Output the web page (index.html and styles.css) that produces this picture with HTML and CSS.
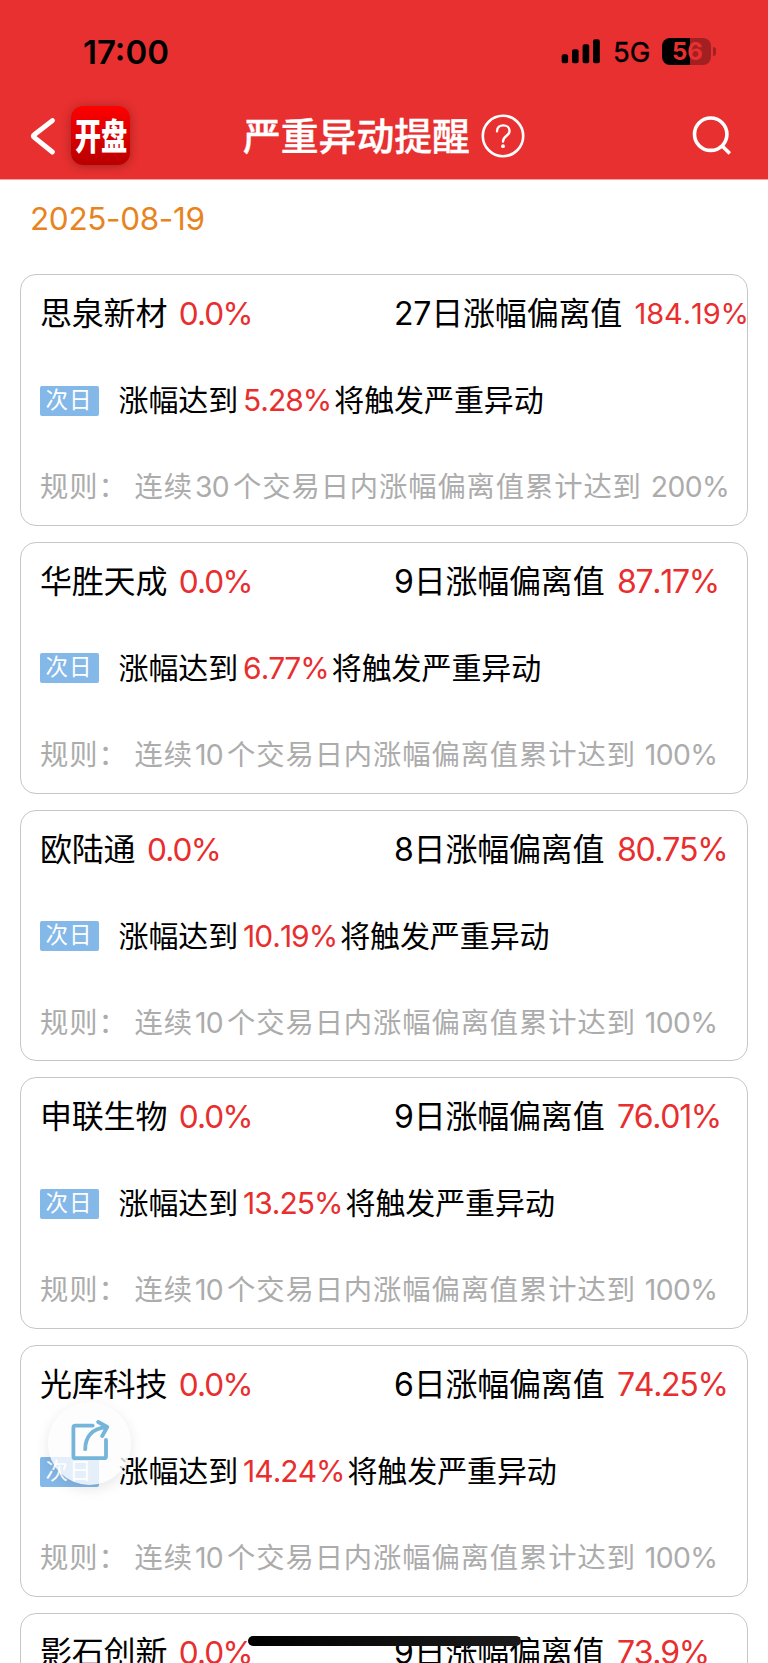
FILE: index.html
```
<!DOCTYPE html>
<html lang="zh-CN">
<head>
<meta charset="utf-8">
<title>严重异动提醒</title>
<link rel="stylesheet" href="styles.css">
</head>
<body>
<header class="header">
  <div class="status">
    <span class="clock">17:00</span>
    <div class="status-right">
      <svg class="signal" width="40" height="25" viewBox="0 0 40 25"><rect x="0.7" y="15.3" width="6.4" height="9" rx="2"/><rect x="11" y="10.3" width="6.6" height="14" rx="2"/><rect x="21.6" y="5.2" width="6.6" height="19.1" rx="2"/><rect x="32" y="0.2" width="6.8" height="24.1" rx="2"/></svg>
      <span class="network">5G</span>
      <div class="battery"><span class="battery-level">56</span><i class="battery-cap"></i></div>
    </div>
  </div>
  <nav class="nav">
    <div class="nav-left">
      <svg width="28" height="40" viewBox="0 0 28 40"><path d="M23.4 4.6 5.2 18.8Q3.4 20 5.2 21.4L23.4 36" fill="none" stroke="#fff" stroke-width="5" stroke-linecap="round" stroke-linejoin="round"/></svg>
      <div class="logo"><span class="logo-text">开盘</span></div>
    </div>
    <div class="nav-title"><h1>严重异动提醒</h1>
      <svg width="44" height="44" viewBox="0 0 44 44" fill="none" stroke="#fff"><circle cx="22" cy="22" r="20.2" stroke-width="2.6"/><path d="M16 17.2C16 13.6 18.6 11.4 22.2 11.4S28.6 13.7 28.6 17C28.6 22 22 21.6 22 27.6" stroke-width="2.4" stroke-linecap="round"/><circle cx="22" cy="32.2" r="1.9" fill="#fff" stroke="none"/></svg>
    </div>
    <svg class="search" width="44" height="44" viewBox="0 0 44 44" fill="none" stroke="#fff" stroke-width="3.6"><circle cx="20.7" cy="20.2" r="16.2"/><path d="M31.7 31.5 39.8 39.6"/></svg>
  </nav>
</header>
<main class="main">
  <div class="date">2025-08-19</div>
  <section class="card">
    <div class="row head"><span class="stock">思泉新材<span class="num pct">0.0%</span></span><span class="dev"><b>27</b>日涨幅偏离值</span><span class="num val small">184.19%</span></div>
    <div class="row cond"><span class="tag">次日</span><span>涨幅达到</span><span class="num">5.28%</span><span>将触发严重异动</span></div>
    <div class="row rule"><span class="label">规则：</span><span>连续</span><b>30</b><span>个交易日内涨幅偏离值累计达到</span><b class="limit">200%</b></div>
  </section>
  <section class="card">
    <div class="row head"><span class="stock">华胜天成<span class="num pct">0.0%</span></span><span class="dev"><b>9</b>日涨幅偏离值</span><span class="num val">87.17%</span></div>
    <div class="row cond"><span class="tag">次日</span><span>涨幅达到</span><span class="num">6.77%</span><span>将触发严重异动</span></div>
    <div class="row rule"><span class="label">规则：</span><span>连续</span><b>10</b><span>个交易日内涨幅偏离值累计达到</span><b class="limit">100%</b></div>
  </section>
  <section class="card">
    <div class="row head"><span class="stock">欧陆通<span class="num pct">0.0%</span></span><span class="dev"><b>8</b>日涨幅偏离值</span><span class="num val">80.75%</span></div>
    <div class="row cond"><span class="tag">次日</span><span>涨幅达到</span><span class="num">10.19%</span><span>将触发严重异动</span></div>
    <div class="row rule"><span class="label">规则：</span><span>连续</span><b>10</b><span>个交易日内涨幅偏离值累计达到</span><b class="limit">100%</b></div>
  </section>
  <section class="card">
    <div class="row head"><span class="stock">申联生物<span class="num pct">0.0%</span></span><span class="dev"><b>9</b>日涨幅偏离值</span><span class="num val">76.01%</span></div>
    <div class="row cond"><span class="tag">次日</span><span>涨幅达到</span><span class="num">13.25%</span><span>将触发严重异动</span></div>
    <div class="row rule"><span class="label">规则：</span><span>连续</span><b>10</b><span>个交易日内涨幅偏离值累计达到</span><b class="limit">100%</b></div>
  </section>
  <section class="card">
    <div class="row head"><span class="stock">光库科技<span class="num pct">0.0%</span></span><span class="dev"><b>6</b>日涨幅偏离值</span><span class="num val">74.25%</span></div>
    <div class="row cond"><span class="tag">次日</span><span>涨幅达到</span><span class="num">14.24%</span><span>将触发严重异动</span></div>
    <div class="row rule"><span class="label">规则：</span><span>连续</span><b>10</b><span>个交易日内涨幅偏离值累计达到</span><b class="limit">100%</b></div>
  </section>
  <section class="card">
    <div class="row head"><span class="stock">影石创新<span class="num pct">0.0%</span></span><span class="dev"><b>9</b>日涨幅偏离值</span><span class="num val">73.9%</span></div>
  </section>
</main>
<div class="share">
  <svg width="42" height="44" viewBox="0 0 42 44" fill="none" stroke="#75b5d9" stroke-width="3.8" stroke-linecap="round" stroke-linejoin="round"><path d="M23.7 5.6H6.4Q4.4 5.6 4.4 7.6V36.2Q4.4 38.2 6.4 38.2H35Q37 38.2 37 36.2V19.8"/><path d="M16.2 29.2C16.2 17.5 23 7.8 37.5 7.4"/><path d="M29.2 2 38.2 7 33.2 16"/></svg>
</div>
<div class="home-bar"></div>
</body>
</html>
```
FILE: styles.css
```
* { box-sizing: border-box; }
body {
  margin: 0;
  height: 1663px;
  overflow: hidden;
  position: relative;
  background: #fff;
  color: #000;
  font-family: Inter, "Noto Sans CJK SC", sans-serif;
}
b { font-weight: inherit; }
svg { display: block; flex: none; }

.header { height: 180px; background: #e83030; border-bottom: 1px solid #f4a3a3; }
.status {
  height: 92px;
  padding: 11px 52px 0 83px;
  display: flex;
  align-items: center;
  justify-content: space-between;
}
.clock { font-size: 33px; font-weight: 600; line-height: 40px; }
.status-right { display: flex; align-items: center; }
.signal { margin-right: 12px; fill: #000; }
.network { width: 49px; font-size: 27.5px; line-height: 34px; padding-top: 1px; -webkit-text-stroke: 0.4px #000; }
.battery { display: flex; align-items: center; gap: 2px; }
.battery-level {
  width: 49px;
  height: 27px;
  border-radius: 8px;
  background: linear-gradient(90deg, #000 56.5%, #a21f22 56.5%);
  color: #e83030;
  font-size: 24px;
  font-weight: 700;
  line-height: 27px;
  padding-left: 2px;
  text-align: center;
}
.battery-cap { width: 3px; height: 9px; border-radius: 0 4px 4px 0; background: #a21f22; }

.nav {
  height: 87px;
  padding: 0 34px 0 29px;
  display: grid;
  grid-template-columns: 214px 1fr 44px;
  align-items: center;
}
.nav-left { display: flex; align-items: center; gap: 14px; }
.logo {
  width: 59px;
  height: 59px;
  border-radius: 12px;
  background: linear-gradient(#fe0000, #b80000);
  box-shadow: 0 1px 10px rgba(80, 20, 20, 0.45);
  display: flex;
  align-items: center;
  justify-content: center;
}
.logo-text {
  color: #fff;
  font-size: 36px;
  font-weight: 900;
  line-height: 40px;
  padding-top: 3px;
  flex: none;
  transform: scaleX(0.73);
}
.nav-title { display: flex; align-items: center; gap: 11px; color: #fff; }
.nav-title h1 {
  margin: 0;
  font-size: 37.8px;
  font-weight: 500;
  line-height: 50px;
  white-space: nowrap;
  -webkit-text-stroke: 0.4px #fff;
}

.main { padding: 0 20px; }
.date {
  height: 94px;
  padding: 19px 10px 0;
  color: #e88420;
  font-size: 31.5px;
  line-height: 40px;
  letter-spacing: -0.35px;
}
.card {
  height: 251.75px;
  margin-bottom: 16px;
  padding: 0 19px;
  border: 1px solid #c6c6c6;
  border-radius: 16px;
}
.row { display: flex; align-items: center; white-space: nowrap; line-height: 40px; }
.row > * { flex: none; }
.num { color: #e82e2e; font-kerning: none; }
.head { height: 78px; font-size: 32px; letter-spacing: -0.2px; }
.stock { width: 354px; }
.pct { margin-left: 11.5px; font-size: 31.6px; letter-spacing: -1.7px; }
.val { margin-left: 12.5px; letter-spacing: -1.3px; }
.small { font-size: 29px; letter-spacing: -0.1px; }
.cond { height: 94px; font-size: 30px; letter-spacing: -0.1px; }
.cond .num { margin: 0 3px 0 5px; letter-spacing: -1px; }
.cond .tag {
  width: 59px;
  height: 30px;
  margin: 1px 20px 0 0;
  border-radius: 2px;
  background: #84b8e8;
  color: #fff;
  font-size: 22.5px;
  line-height: 28px;
  letter-spacing: 1px;
  text-align: center;
}
.cond .tag { margin-left: -0.5px; }
.rule { height: 80px; font-size: 28.3px; letter-spacing: 0.9px; color: #acacac; }
.rule b { margin: 0 4px 0 2px; letter-spacing: -0.6px; }
.rule .limit { margin-left: 9px; }
.rule .label { width: 94.5px; }

.share {
  position: absolute;
  left: 48px;
  top: 1402px;
  width: 83px;
  height: 83px;
  padding-bottom: 3px;
  border-radius: 50%;
  background: rgba(252, 252, 252, 0.8);
  box-shadow: 0 4px 14px rgba(0, 0, 0, 0.1);
  display: flex;
  align-items: center;
  justify-content: center;
}
.home-bar {
  position: absolute;
  left: 248px;
  top: 1636px;
  width: 273px;
  height: 10px;
  border-radius: 5px;
  background: linear-gradient(90deg, #000, #1c1c1c);
}
```
